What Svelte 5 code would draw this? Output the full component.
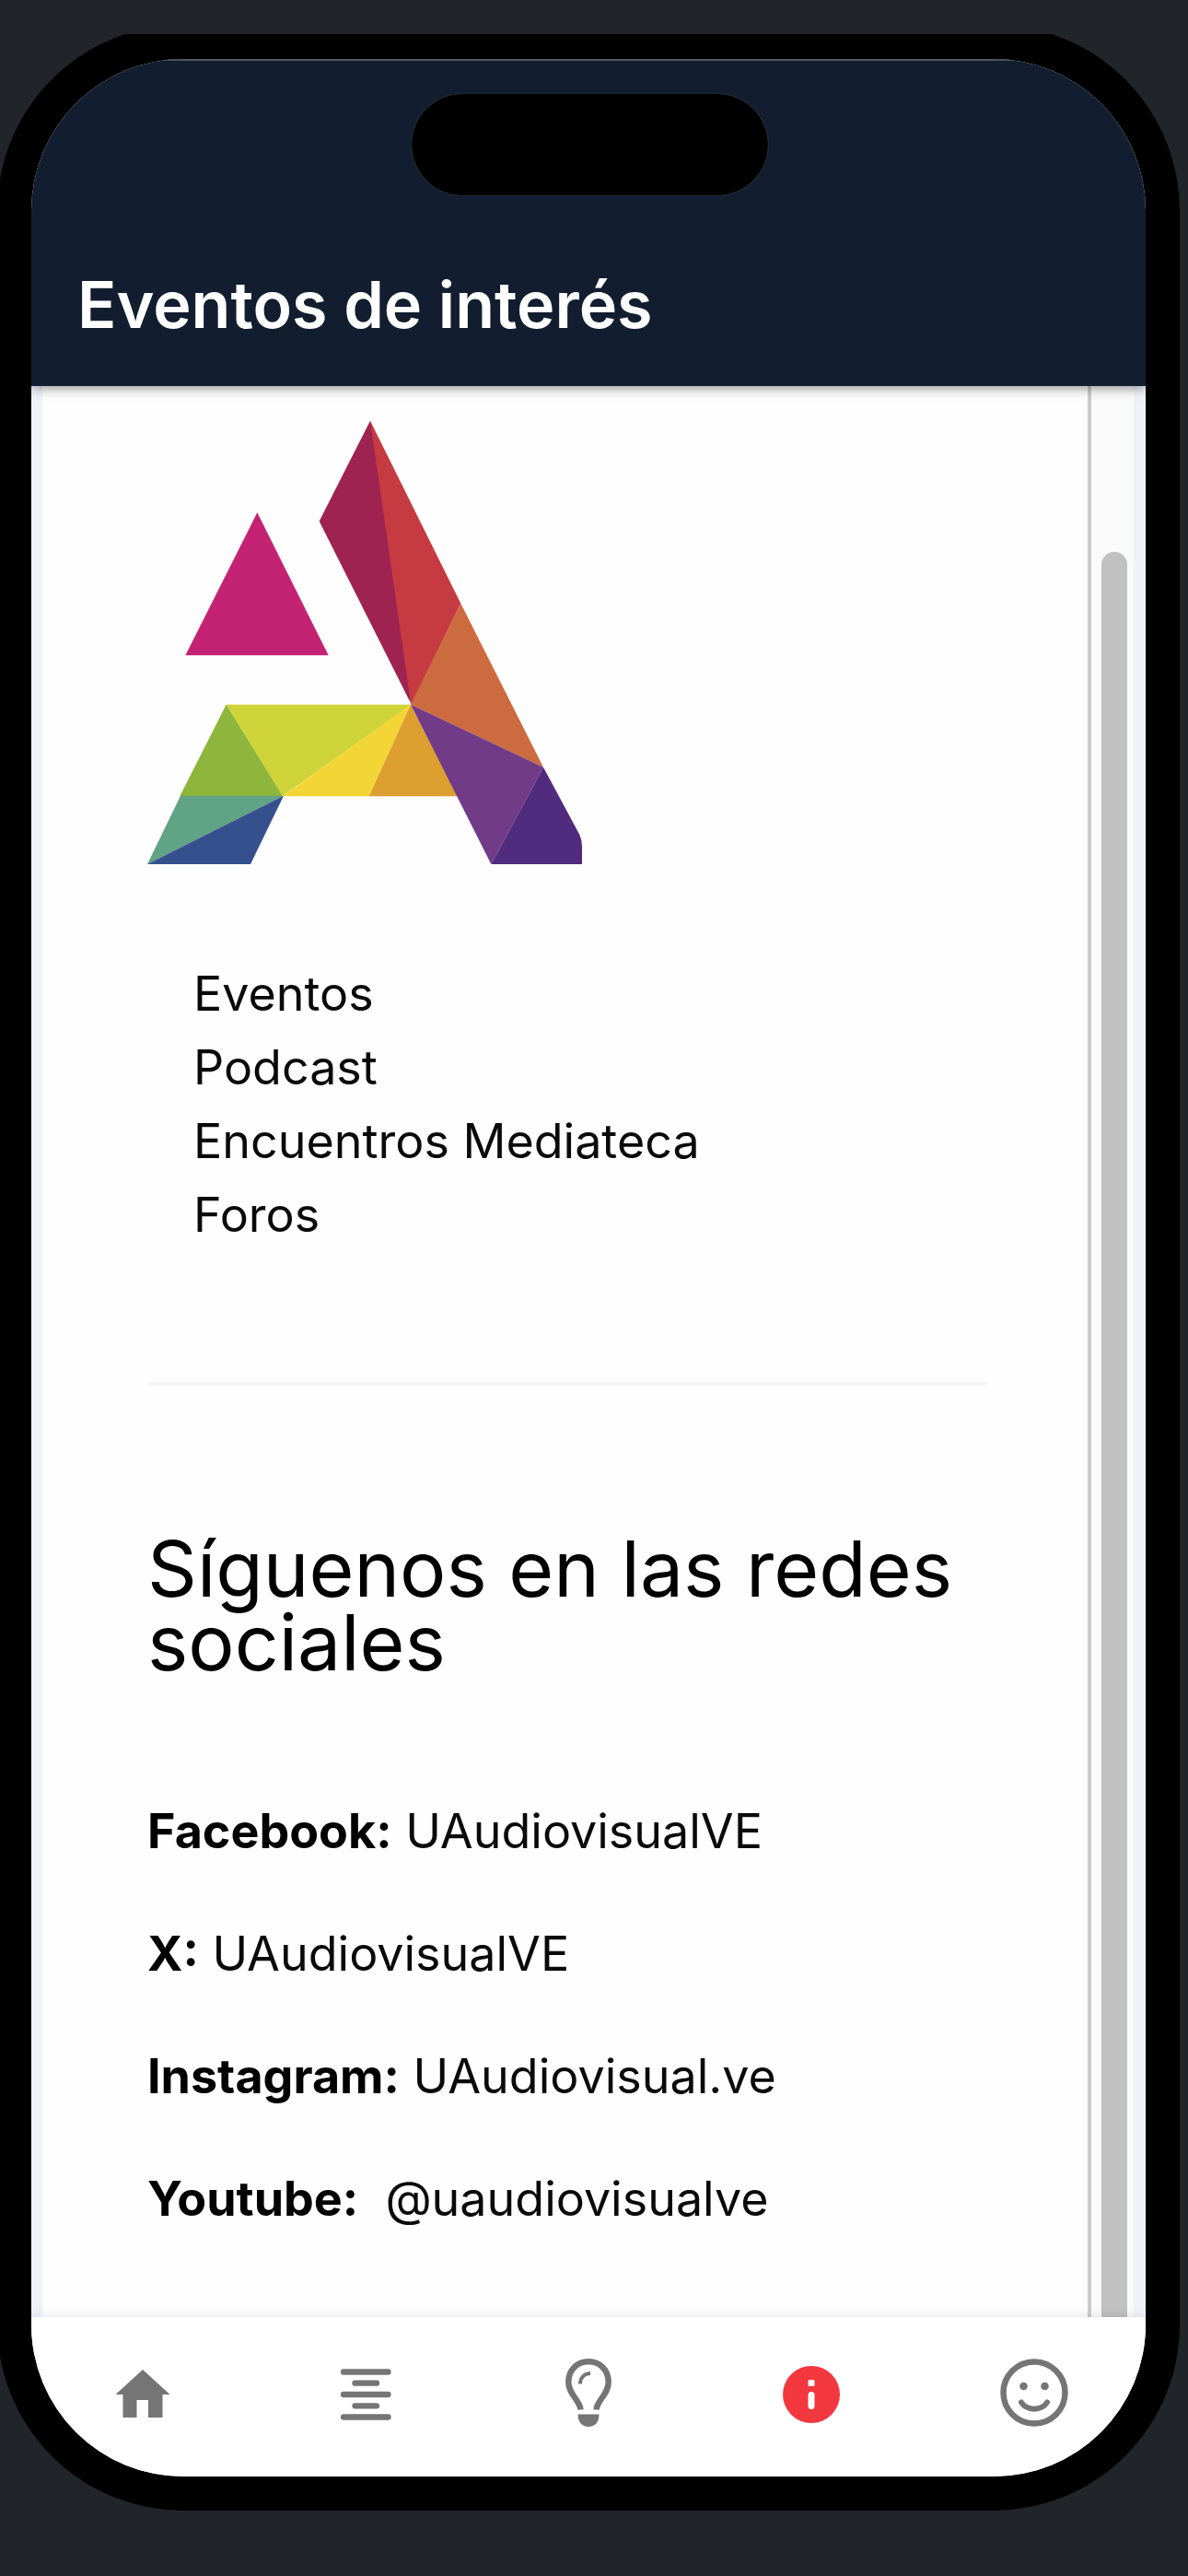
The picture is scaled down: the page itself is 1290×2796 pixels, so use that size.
<script lang="ts">
  /**
   * Eventos de interés: events screen shown inside a phone shell
   */

  interface Social {
    label: string;
    handle: string;
  }

  const links = ['Eventos', 'Podcast', 'Encuentros Mediateca', 'Foros'];

  const socials: Social[] = [
    { label: 'Facebook:', handle: 'UAudiovisualVE' },
    { label: 'X:', handle: 'UAudiovisualVE' },
    { label: 'Instagram:', handle: 'UAudiovisual.ve' },
    { label: 'Youtube:', handle: '\u00a0@uaudiovisualve' },
  ];

  const tabs = ['home', 'list', 'ideas', 'info', 'smile'];

  let active = $state('info');
</script>

<div class="stage">
  <div class="phone">
    <div class="screen">
      <div class="island"></div>

      <header class="topbar">
        <h1>Eventos de interés</h1>
      </header>

      <main class="body">
        <div class="page">
          <svg class="logo" viewBox="60 30 1416 1467" aria-hidden="true">
            <path fill="#c63b41" d="M786 50 1081 645 920 974 870 800 770 300Z" />
            <path fill="#9e2350" d="M786 50 620 377 918 970Z" />
            <path fill="#cd6b40" d="M1081 645 1350 1178 918 974Z" />
            <path fill="#c42374" d="M418 349 650 814H184Z" />
            <path fill="#8eb63c" d="M317 974 502 1272H166Z" />
            <path fill="#cdd339" d="M317 974H920L500 1272Z" />
            <path fill="#f3d636" d="M918 974 782 1273H500Z" />
            <path fill="#dd9f2f" d="M918 974 1070 1273H782Z" />
            <path fill="#60a385" d="M168 1271H504L60 1494Z" />
            <path fill="#36508e" d="M504 1271 396 1494H60Z" />
            <path fill="#713b88" d="M918 974 1350 1178 1180 1494Z" />
            <path fill="#512c7e" d="M1350 1178 1468 1398Q1476 1415 1476 1436V1494H1180Z" />
          </svg>

          <ul class="links">
            {#each links as link}
              <li><a href="#top">{link}</a></li>
            {/each}
          </ul>

          <hr />

          <h2>Síguenos en las redes sociales</h2>

          {#each socials as social}
            <p><strong>{social.label}</strong> {social.handle}</p>
          {/each}
        </div>
        <div class="scrollbar">
          <div class="thumb"></div>
        </div>
      </main>

      <nav class="tabs">
        {#each tabs as tab}
          <button class:active={active === tab} aria-label={tab} onclick={() => (active = tab)}>
            <svg viewBox="0 0 74 74" fill="none" stroke-linecap="round" aria-hidden="true">
              {#if tab === 'home'}
                <path fill="currentColor" d="M37 12 66.500 39H58.500V64H43V45H30.500V64H15.500V39H7.500Z" />
              {:else if tab === 'list'}
                <path
                  stroke="currentColor"
                  stroke-width="6.300"
                  d="M13 14.500H61.500M13 39H61.500M13 63.500H61.500M25.500 26.700H49M25.500 51.300H49"
                />
              {:else if tab === 'ideas'}
                <path
                  stroke="currentColor"
                  stroke-width="6.500"
                  stroke-linecap="butt"
                  d="M28.500 55.500C27.500 45 15.300 39 15.300 25.500C15.300 12 25 3.300 37 3.300S58.700 12 58.700 25.500C58.700 39 46.500 45 45.500 55.500"
                />
                <path stroke="currentColor" stroke-width="4" stroke-linecap="butt" d="M28 27.500C28 21 32 16.500 39 16" />
                <path fill="currentColor" d="M25.500 60.500H48.500C48.500 69 44 74 37 74S25.500 69 25.500 60.500Z" />
              {:else if tab === 'info'}
                <circle fill="currentColor" cx="37" cy="39" r="31" />
                <rect fill="#fff" x="33.500" y="23" width="7" height="7" rx="1.500" />
                <rect fill="#fff" x="33.500" y="36" width="7" height="19" rx="3.500" />
              {:else}
                <circle stroke="currentColor" stroke-width="6.500" cx="37" cy="37" r="33.500" />
                <circle fill="currentColor" cx="25.500" cy="30" r="4.300" />
                <circle fill="currentColor" cx="48.500" cy="30" r="4.300" />
                <path stroke="currentColor" stroke-width="6" d="M23 47.500C29 57 45 57 51 47.500" />
              {/if}
            </svg>
          </button>
        {/each}
      </nav>
    </div>
  </div>
</div>

<style>
  :global(body) {
    background: #212429;
  }

  .stage {
    box-sizing: border-box;
    min-height: 100vh;
    display: flex;
    border-top: 37px solid #212429;
    padding-bottom: 71px;
    overflow: hidden;
    font-family: Inter, 'Liberation Sans', sans-serif;
  }

  /* the shell runs slightly past the top and left edges of the stage */
  .phone {
    flex: 1;
    display: flex;
    margin: -10px 9px 0 -3px;
    border: 37px solid #000;
    border-radius: 202px;
    background: #000;
  }

  .screen {
    position: relative;
    flex: 1;
    display: flex;
    flex-direction: column;
    min-width: 0;
    border-radius: 165px;
    overflow: hidden;
    background: #fff;
  }

  .island {
    position: absolute;
    z-index: 3;
    top: 38px;
    left: 50%;
    width: 387px;
    height: 110px;
    margin-left: -192px;
    border-radius: 55px;
    background: #000;
    box-shadow: 0 0 1px #6f777d;
  }

  .topbar {
    position: relative;
    z-index: 2;
    box-sizing: border-box;
    height: 355px;
    display: flex;
    align-items: flex-end;
    padding: 0 50px 40px;
    background: #121e2f;
    border-top: 2px solid #4d5964;
    box-shadow: 0 2px 12px rgba(0, 0, 0, 0.45);
  }

  .topbar h1 {
    margin: 0;
    font-size: 70px;
    line-height: 96px;
    font-weight: 600;
    color: #fff;
  }

  .body {
    flex: 1;
    display: flex;
    border: 0 solid #f0f2fa;
    border-width: 0 13px 0 12px;
    background: #fefefe;
  }

  .page {
    flex: 1;
    min-width: 0;
    padding: 31px 110px 0 114px;
    border-right: 4px solid #ccc;
    font-size: 52px;
    line-height: 80px;
    color: #0a0a0a;
  }

  .logo {
    display: block;
    width: 472px;
    height: 489px;
  }

  .links {
    margin: 100px 0 0;
    padding: 0 0 0 50px;
    list-style: none;
  }

  .links a {
    color: inherit;
    text-decoration: none;
  }

  hr {
    height: 4px;
    margin: 141px 0 159px;
    border: 0;
    background: #f5f5f5;
  }

  h2 {
    margin: 0 0 125px;
    font-size: 84px;
    line-height: 80px;
    font-weight: 400;
    color: #000;
  }

  p {
    margin: 0 0 53px;
  }

  p strong {
    font-weight: 700;
    color: #000;
  }

  .scrollbar {
    width: 28px;
    display: flex;
    padding: 180px 7px 0 11px;
    background: #fafafa;
  }

  .thumb {
    flex: 1;
    border-radius: 14px 14px 0 0;
    background: #c1c1c1;
  }

  .tabs {
    position: relative;
    z-index: 1;
    display: flex;
    box-sizing: border-box;
    height: 173px;
    background: #fff;
    box-shadow: 0 0 12px rgba(0, 0, 0, 0.12);
  }

  .tabs button {
    flex: 1;
    display: flex;
    justify-content: center;
    align-items: flex-start;
    padding: 45px 0 0;
    border: none;
    background: none;
    color: #757575;
    cursor: pointer;
  }

  .tabs button.active {
    color: #f2373f;
  }

  .tabs svg {
    width: 74px;
    height: 74px;
  }
</style>
